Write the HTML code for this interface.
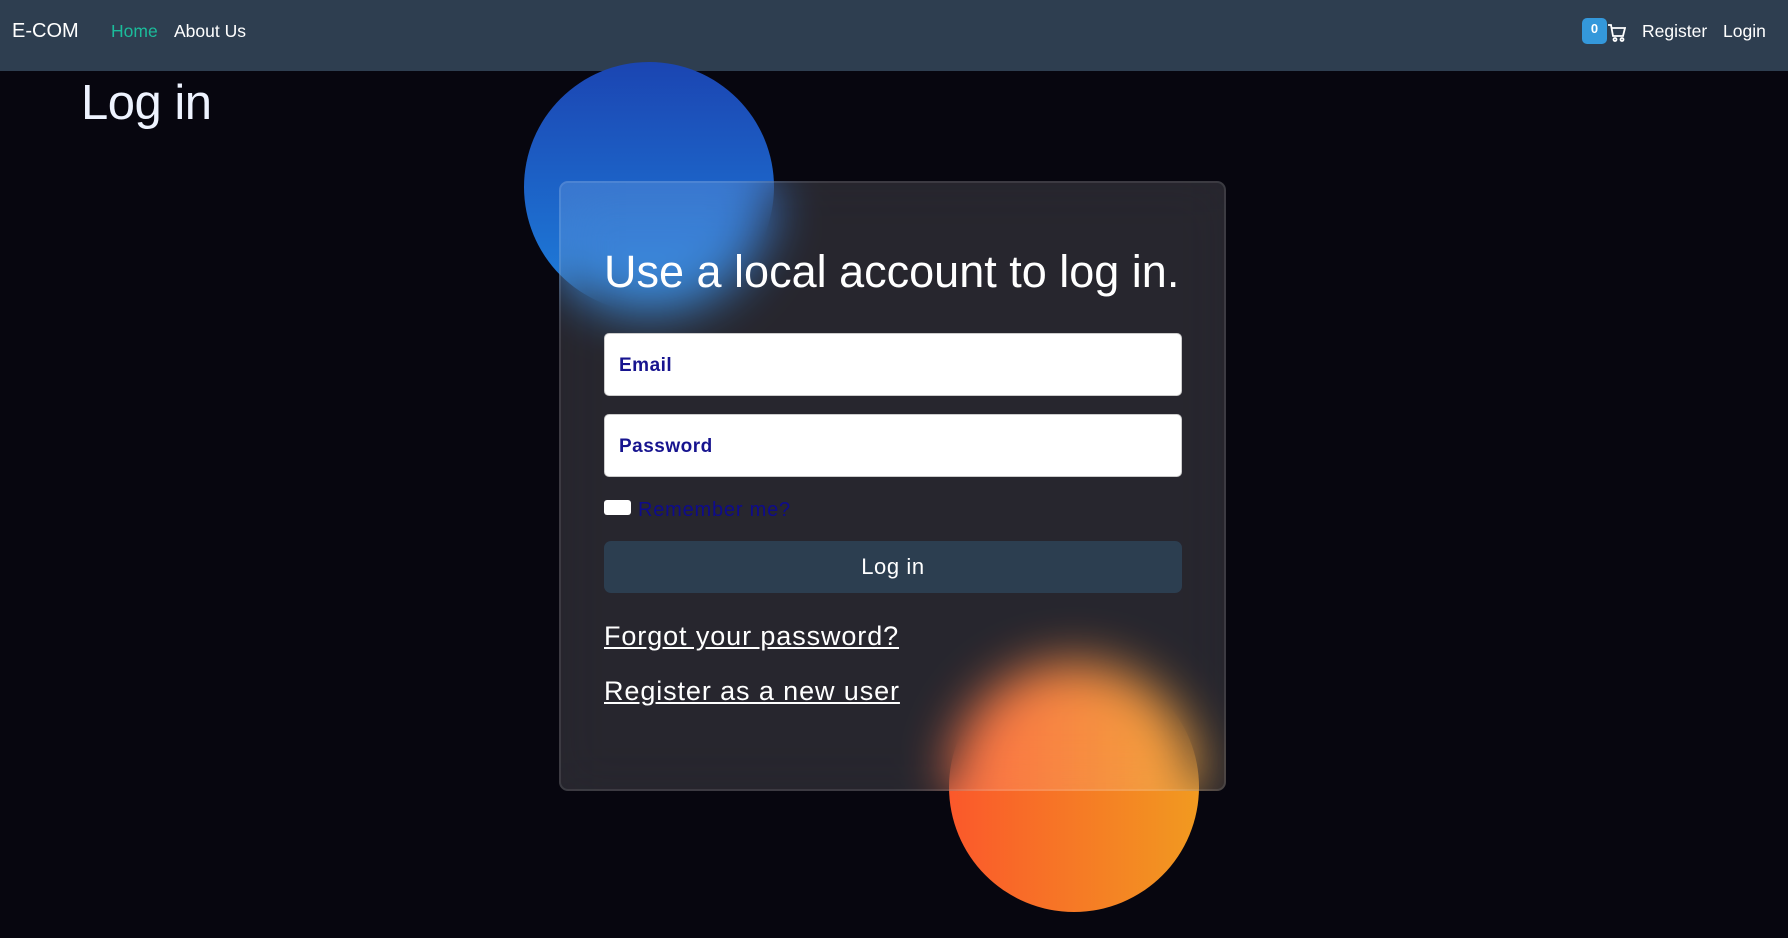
<!DOCTYPE html>
<html><head><meta charset="utf-8"><style>
*{box-sizing:border-box;margin:0;padding:0}
html,body{width:1788px;height:938px;overflow:hidden;background:#07060f;font-family:"Liberation Sans",sans-serif}
.nav{position:absolute;left:0;top:0;width:1788px;height:71px;background:#2e3e50;color:#fff;font-size:17.5px}
.nav span{position:absolute;top:21px}
h1{position:absolute;left:81px;top:75px;font-size:49px;font-weight:400;color:#eef3ff;letter-spacing:-0.5px}
.c{position:absolute;width:250px;height:250px;border-radius:50%}
.blue{left:524px;top:62px;background:linear-gradient(180deg,#1b45b2,#1e80dc)}
.orange{left:949px;top:662px;background:linear-gradient(90deg,#fb582b,#f19a20)}
.card{position:absolute;left:559px;top:181px;width:667px;height:610px;border-radius:9px;background:rgba(255,255,255,0.13);backdrop-filter:blur(25px);-webkit-backdrop-filter:blur(25px);border:2px solid rgba(255,255,255,0.1)}
.card h2{position:absolute;left:43px;top:63px;font-size:45px;font-weight:400;color:#fff;white-space:nowrap}
.inp{position:absolute;left:43px;width:578px;height:63px;background:#fff;border-radius:5px;border:1px solid #ccc;color:#17148f;font-size:19px;font-weight:bold;padding:21px 14px;letter-spacing:0.5px}
.btn{position:absolute;left:43px;top:358px;width:578px;height:52px;background:#2c3e50;border-radius:7px;color:#fff;font-size:22px;text-align:center;line-height:52px;letter-spacing:0.6px}
.lnk{position:absolute;left:43px;color:#fff;font-size:27px;text-decoration:underline;letter-spacing:0.9px}
</style></head><body>
<div class="nav">
<span style="left:12px;font-size:20px;top:20px">E-COM</span>
<span style="left:111px;color:#1bbc9b">Home</span>
<span style="left:174px">About Us</span>
<div style="position:absolute;left:1582px;top:18px;width:25px;height:26px;background:#3498db;border-radius:5px;font-size:13px;font-weight:bold;text-align:center;line-height:22px;color:#fff">0</div>
<svg style="position:absolute;left:1607px;top:23px" width="19" height="20" viewBox="0 0 19 20" fill="none" stroke="#fff" stroke-width="1.8"><path d="M1 2h3l2 11h10l2-8H5"/><circle cx="8" cy="16.5" r="1.5"/><circle cx="15" cy="16.5" r="1.5"/></svg>
<span style="left:1642px">Register</span>
<span style="left:1723px">Login</span>
</div>
<h1>Log in</h1>
<div class="c blue"></div>
<div class="c orange"></div>
<div class="card">
<h2>Use a local account to log in.</h2>
<div class="inp" style="top:150px">Email</div>
<div class="inp" style="top:231px">Password</div>
<div style="position:absolute;left:43px;top:317px;width:27px;height:15px;background:#fff;border-radius:3px"></div>
<div style="position:absolute;left:77px;top:316px;color:#0e0b8c;font-size:20px;letter-spacing:0.8px">Remember me?</div>
<div class="btn">Log in</div>
<div class="lnk" style="top:438px">Forgot your password?</div>
<div class="lnk" style="top:493px">Register as a new user</div>
</div>
</body></html>
